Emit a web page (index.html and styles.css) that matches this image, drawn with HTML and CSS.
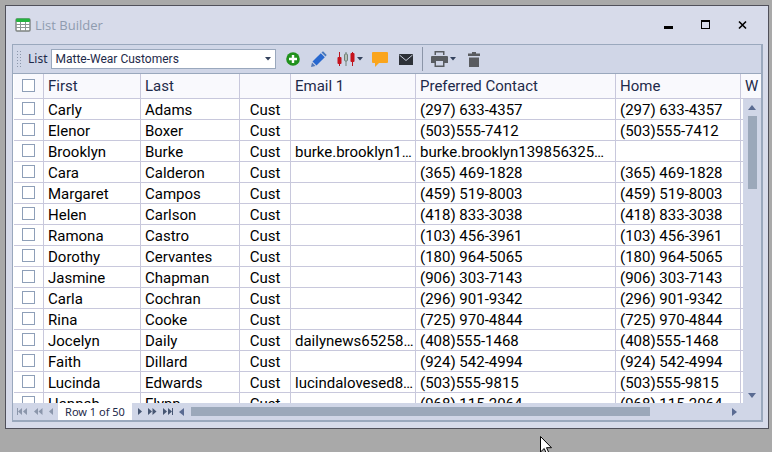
FILE: index.html
```html
<!DOCTYPE html>
<html lang="en">

<head>
    <meta charset="UTF-8">
    <meta name="viewport" content="width=device-width, initial-scale=1.0">
    <title>List Builder</title>
    <link rel="stylesheet" href="styles.css">
</head>

<body>
    <div class="window">
        <header class="title_bar">
            <svg class="title_icon" width="16" height="14" viewBox="0 0 16 14">
                <rect x="1" y="1" width="14" height="12" rx="1" fill="#fff" stroke="#7d8280" stroke-width="1.4" />
                <rect x="1" y="0.5" width="14" height="3.5" rx="1" fill="#25b340" />
                <path d="M1 6.5h14M1 9.5h14M5.5 4v9M10.5 4v9" stroke="#8d9693" fill="none" />
            </svg>
            <h1>List Builder</h1>
            <div class="window_buttons">
                <button type="button" aria-label="Minimize">
                    <svg width="10" height="10" viewBox="0 0 10 10"><rect x="0" y="6" width="9" height="3" /></svg>
                </button>
                <button type="button" aria-label="Maximize">
                    <svg width="10" height="10" viewBox="0 0 10 10"><path d="M0 0h9v9H0zM1 2v6h7V2z" fill-rule="evenodd" /></svg>
                </button>
                <button type="button" aria-label="Close">
                    <svg width="10" height="10" viewBox="0 0 10 10"><path d="M1 1.500l7 7M8 1.500l-7 7" stroke="#000" stroke-width="1.600" /></svg>
                </button>
            </div>
        </header>
        <main class="panel">
            <div class="toolbar">
                <span class="grip"></span>
                <label for="list">List</label>
                <div class="select_box">
                    <select id="list">
                        <option>Matte-Wear Customers</option>
                    </select>
                    <svg class="arrow" width="6" height="4" viewBox="0 0 6 4"><path d="M0 0h6L3 3.500z" /></svg>
                </div>
                <div class="tools">
                    <button type="button" class="tool" aria-label="Add">
                        <svg width="14" height="14" viewBox="0 0 14 14"><circle cx="7" cy="7" r="6.800" fill="#20911c" /><path d="M7 3v8M3 7h8" stroke="#fff" stroke-width="2.400" /></svg>
                    </button>
                    <button type="button" class="tool" aria-label="Edit">
                        <svg width="16" height="16" viewBox="0 0 16 16"><path d="M1.500 10.500L9.800 2.200l4 4L5.500 14.500z" fill="#2868cf" /><path d="M10.500 1.500L12 0.300l3.700 3.700-1.200 1.500z" fill="#4778bd" /><path d="M1 11.500L4.500 15L0 16z" fill="#5277b5" /></svg>
                    </button>
                    <button type="button" class="tool menu" aria-label="Filter">
                        <svg width="18" height="14" viewBox="0 0 18 14"><path d="M2.500 0v14M15.500 0v14" stroke="#b9141f" /><path d="M9 0v14" stroke="#6f8176" /><rect x="0.500" y="5" width="4" height="7" rx="1" fill="#c5121d" /><rect x="7.500" y="2" width="3" height="7" rx="1" fill="#b5bfb9" stroke="#6f8176" /><rect x="13.500" y="1" width="4" height="9" rx="1" fill="#c5121d" /></svg>
                        <svg class="arrow" width="6" height="4" viewBox="0 0 6 4"><path d="M0 0h6L3 3.500z" /></svg>
                    </button>
                    <button type="button" class="tool" aria-label="Message">
                        <svg width="16" height="16" viewBox="0 0 16 16"><path d="M1 1h14q1 0 1 1v9q0 1-1 1H7l-4 4v-4H1q-1 0-1-1V2q0-1 1-1z" fill="#faa51c" /></svg>
                    </button>
                    <button type="button" class="tool" aria-label="Email">
                        <svg width="14" height="11" viewBox="0 0 14 11"><rect width="14" height="11" fill="#2d3138" /><path d="M0.500 1L7 6.500L13.500 1" stroke="#c8cddb" fill="none" /></svg>
                    </button>
                    <span class="separator"></span>
                    <button type="button" class="tool menu" aria-label="Print">
                        <svg width="17" height="16" viewBox="0 0 17 16"><path d="M3.500 0h10v4h-10zM1 5h15q1 0 1 1v6h-3.500v4h-10v-4H0V6q0-1 1-1z" fill="#595c60" /><path d="M5 1.500h7V4H5zM5 10h7v4.500H5z" fill="#d0d6e7" /></svg>
                        <svg class="arrow" width="6" height="4" viewBox="0 0 6 4"><path d="M0 0h6L3 3.500z" /></svg>
                    </button>
                    <button type="button" class="tool" aria-label="Delete">
                        <svg width="12" height="15" viewBox="0 0 12 15"><path d="M0 1.500h4V0h4v1.500h4V4H0zM1 5.500h10V15H1z" fill="#5a5c60" /></svg>
                    </button>
                </div>
            </div>
            <div class="grid">
                <table>
                    <colgroup>
                        <col class="col_check">
                        <col class="col_first">
                        <col class="col_last">
                        <col class="col_type">
                        <col class="col_email">
                        <col class="col_contact">
                        <col class="col_home">
                        <col>
                    </colgroup>
                    <thead>
                        <tr>
                            <th><input type="checkbox" aria-label="Select all"></th>
                            <th>First</th>
                            <th>Last</th>
                            <th></th>
                            <th>Email 1</th>
                            <th>Preferred Contact</th>
                            <th>Home</th>
                            <th class="cut">W</th>
                        </tr>
                    </thead>
                    <tbody id="rows"></tbody>
                </table>
                <div class="scroll_v">
                    <svg width="8" height="5" viewBox="0 0 8 5"><path d="M0 5h8L4 0z" /></svg>
                    <span class="thumb"></span>
                    <svg width="8" height="5" viewBox="0 0 8 5"><path d="M0 0h8L4 5z" /></svg>
                </div>
            </div>
            <footer class="pager">
                <div class="nav off">
                    <button type="button" aria-label="First row"><svg width="10" height="7" viewBox="0 0 10 7"><path d="M0 0h1v7H0zM5 0v7L1 3.500zM10 0v7L6 3.500z" /></svg></button>
                    <button type="button" aria-label="Previous page"><svg width="9" height="7" viewBox="0 0 9 7"><path d="M4 0v7L0 3.500zM8.500 0v7L4.500 3.500z" /></svg></button>
                    <button type="button" aria-label="Previous row"><svg width="4" height="7" viewBox="0 0 4 7"><path d="M4 0v7L0 3.500z" /></svg></button>
                </div>
                <span class="page_text">Row 1 of 50</span>
                <div class="nav">
                    <button type="button" aria-label="Next row"><svg width="4" height="7" viewBox="0 0 4 7"><path d="M0 0v7L4 3.500z" /></svg></button>
                    <button type="button" aria-label="Next page"><svg width="9" height="7" viewBox="0 0 9 7"><path d="M0 0v7L4 3.500zM4.500 0v7L8.500 3.500z" /></svg></button>
                    <button type="button" aria-label="Last row"><svg width="10" height="7" viewBox="0 0 10 7"><path d="M0 0v7L4 3.500zM5 0v7L9 3.500zM9 0h1v7H9z" /></svg></button>
                </div>
                <div class="scroll_h">
                    <svg width="5" height="8" viewBox="0 0 5 8"><path d="M5 0v8L0 4z" /></svg>
                    <span class="track"><span class="thumb"></span></span>
                    <svg width="5" height="8" viewBox="0 0 5 8"><path d="M0 0v8L5 4z" /></svg>
                </div>
            </footer>
        </main>
    </div>
    <svg class="cursor" width="12" height="19" viewBox="0 0 12 19">
        <path d="M0.500 0.500v15.500l3.700-3.500 2.500 5.500 2.300-1-2.500-5.300h5z" fill="#fff" stroke="#000" />
    </svg>
    <script src="script.js"></script>
</body>

</html>
```
FILE: styles.css
```css
* {
    box-sizing: border-box;
    padding: 0;
    margin: 0;
}

body {
    display: flex;
    height: 100vh;
    padding: 5px 3px 23px 5px;
    overflow: hidden;
    font: 12px/16px "Noto Sans", "Open Sans", sans-serif;
    color: #1e2a4a;
    background-color: #a9a9a9;
}

button {
    display: flex;
    align-items: center;
    justify-content: center;
    border: 0;
    background: none;
}

.window {
    display: flex;
    flex-direction: column;
    flex: 1;
    min-width: 0;
    padding: 0 5px 6px 6px;
    border: 1px solid #50505a;
    background-color: #d7dbea;
}

.title_bar {
    display: flex;
    align-items: center;
    height: 38px;
    padding: 0 15px 0 3px;
    gap: 4px;
}

h1 {
    font: 13px/20px "Open Sans", "Noto Sans", sans-serif;
    color: #8f9baf;
}

.window_buttons {
    display: flex;
    gap: 27px;
    margin-left: auto;
}

.panel {
    display: flex;
    flex-direction: column;
    flex: 1;
    min-height: 0;
    border: 1px solid #9aa8bd;
    border-width: 1px 2px 2px 1px;
    background-color: #d0d6e7;
}

.toolbar {
    display: flex;
    align-items: center;
    height: 29px;
    padding-left: 3px;
    border-bottom: 1px solid #9aa8bd;
}

.grip {
    width: 6px;
    height: 18px;
    margin-right: 6px;
    background-image: radial-gradient(#8c97ab 1px, transparent 1px);
    background-size: 3px 3px;
}

.select_box {
    display: flex;
    align-items: center;
    position: relative;
    width: 225px;
    margin-left: 4px;
}

.select_box select {
    appearance: none;
    width: 100%;
    height: 20px;
    padding-left: 3px;
    border: 1px solid #9aa8bd;
    border-radius: 0;
    font: 12px/16px Roboto, "Noto Sans", sans-serif;
    color: #1e2a4a;
    background-color: #fff;
}

.select_box .arrow {
    position: absolute;
    right: 5px;
}

.arrow {
    fill: #33415c;
}

.tools {
    display: flex;
    align-items: center;
    margin-left: 6px;
    gap: 4px;
}

.tool {
    width: 22px;
    height: 22px;
}

.menu {
    width: 31px;
    gap: 2px;
}

.separator {
    width: 1px;
    height: 24px;
    margin: 0 1px;
    background-color: #8b95a8;
}

.grid {
    position: relative;
    flex: 1;
    min-height: 0;
    padding-left: 1px;
    overflow: hidden;
    background-color: #fff;
}

table {
    width: 100%;
    table-layout: fixed;
    border-collapse: separate;
    border-spacing: 0;
    font: 15px/18px Roboto, "Liberation Sans", sans-serif;
    color: #000;
}

.col_check {
    width: 30px;
}

.col_first {
    width: 97px;
}

.col_last {
    width: 99px;
}

.col_type {
    width: 51px;
}

.col_email,
.col_home {
    width: 125px;
}

.col_contact {
    width: 200px;
}

th,
td {
    height: 21px;
    padding: 2px 0 0 4px;
    border-right: 1px solid #c8c8dc;
    border-bottom: 1px solid #c8c8dc;
    overflow: hidden;
    white-space: nowrap;
    text-align: left;
}

th {
    height: 25px;
    padding-top: 0;
    font-weight: normal;
    color: #1e2a4a;
    background-color: #f9f9fd;
}

th:first-child,
td:first-child {
    padding: 0 0 1px;
}

.cut {
    border-right: 0;
}

.type {
    padding-left: 0;
    text-align: center;
}

input[type="checkbox"] {
    appearance: none;
    display: block;
    width: 13px;
    height: 13px;
    margin: 0 auto;
    border: 1px solid #8e9fb8;
    background-color: #fff;
}

.scroll_v {
    display: flex;
    flex-direction: column;
    align-items: center;
    position: absolute;
    top: 25px;
    right: 0;
    bottom: 0;
    width: 18px;
    padding: 6px 0 5px;
    background-color: #d0d6e7;
}

.scroll_v .thumb {
    width: 9px;
    height: 25%;
    margin: 6px 0 auto;
}

.scroll_v svg,
.scroll_h svg {
    flex: none;
    fill: #5a6b92;
}

.thumb {
    background-color: #9ba8ba;
}

.pager {
    display: flex;
    align-items: center;
    height: 17px;
    padding-left: 1px;
    background-color: #d0d6e7;
}

.nav {
    display: flex;
    align-items: center;
    justify-content: space-between;
    width: 44px;
    padding: 0 3px 0 6px;
    fill: #465673;
}

.off {
    padding: 0 5px 0 3px;
    fill: #8b96ab;
}

.page_text {
    width: 74px;
    height: 17px;
    font: 11px/17px "Noto Sans", "Open Sans", sans-serif;
    text-align: center;
    background-color: #fff;
}

.scroll_h {
    display: flex;
    align-items: center;
    flex: 1;
    gap: 7px;
    padding: 0 24px 0 3px;
}

.track {
    flex: 1;
}

.track .thumb {
    display: block;
    width: 86%;
    height: 9px;
}

.cursor {
    position: absolute;
    left: 540px;
    top: 436px;
}
```
FILE: script.js
```js
var people = [
    ['Carly', 'Adams', '', '(297) 633-4357', '(297) 633-4357'],
    ['Elenor', 'Boxer', '', '(503)555-7412', '(503)555-7412'],
    ['Brooklyn', 'Burke', 'burke.brooklyn1…', 'burke.brooklyn139856325…', ''],
    ['Cara', 'Calderon', '', '(365) 469-1828', '(365) 469-1828'],
    ['Margaret', 'Campos', '', '(459) 519-8003', '(459) 519-8003'],
    ['Helen', 'Carlson', '', '(418) 833-3038', '(418) 833-3038'],
    ['Ramona', 'Castro', '', '(103) 456-3961', '(103) 456-3961'],
    ['Dorothy', 'Cervantes', '', '(180) 964-5065', '(180) 964-5065'],
    ['Jasmine', 'Chapman', '', '(906) 303-7143', '(906) 303-7143'],
    ['Carla', 'Cochran', '', '(296) 901-9342', '(296) 901-9342'],
    ['Rina', 'Cooke', '', '(725) 970-4844', '(725) 970-4844'],
    ['Jocelyn', 'Daily', 'dailynews65258…', '(408)555-1468', '(408)555-1468'],
    ['Faith', 'Dillard', '', '(924) 542-4994', '(924) 542-4994'],
    ['Lucinda', 'Edwards', 'lucindalovesed8…', '(503)555-9815', '(503)555-9815'],
    ['Hannah', 'Flynn', '', '(968) 115-2064', '(968) 115-2064']
];

var rows = document.querySelector('#rows');

for (var i = 0; i < people.length; i++) {
    var p = people[i];
    var tr = document.createElement('tr');
    var check = document.createElement('input');
    check.type = 'checkbox';
    check.setAttribute('aria-label', 'Select ' + p[0] + ' ' + p[1]);
    tr.insertCell().appendChild(check);

    var cells = [p[0], p[1], 'Cust', p[2], p[3], p[4], ''];
    for (var j = 0; j < cells.length; j++) {
        var td = tr.insertCell();
        td.textContent = cells[j];
        if (j == 2) {
            td.className = 'type';
        }
    }
    rows.appendChild(tr);
}
```
